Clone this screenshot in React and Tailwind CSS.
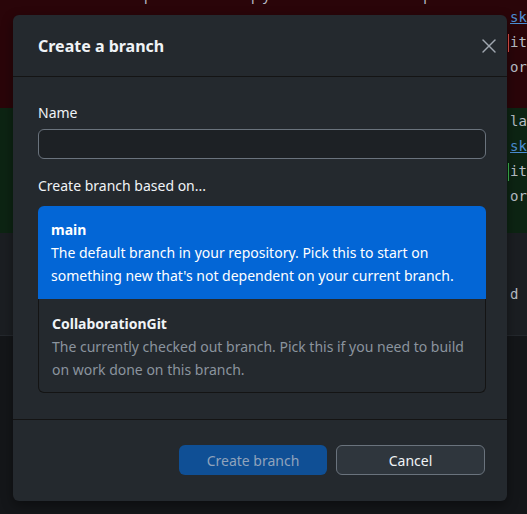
import { X } from "lucide-react";

const FONT = { fontFamily: '"Noto Sans", "Segoe UI", sans-serif' };
const MONO = { fontFamily: '"DejaVu Sans Mono", monospace' };

// fragments of the diff view that peek out on the right of the dialog
const RED_LINES = [
  { text: "sk", link: true },
  { text: "it", mark: true },
  { text: "or" },
];
const GREEN_LINES = [
  { text: "la" },
  { text: "sk", link: true },
  { text: "it", mark: true },
  { text: "or" },
];

function DiffLine({ line, markColor }) {
  return (
    <div className="flex h-[25px] items-center">
      <span className={`h-[18px] w-px ${line.mark ? markColor : "bg-transparent"}`} />
      <span
        className={`pl-[1px] text-[14px] ${line.link ? "text-[#4c8fd6] underline" : "text-[#b8bec6]"}`}
        style={MONO}
      >
        {line.text}
      </span>
    </div>
  );
}

function Option({ title, desc, selected }) {
  return (
    <div
      className={
        selected
          ? "rounded-t-[6px] bg-[#0366d6] px-[13px] py-[12px] text-white"
          : "rounded-b-[6px] border border-t-0 border-[#141414] px-[13px] pt-[13px] pb-[11px] text-[#8b949e]"
      }
    >
      <div className={`text-[14px] font-bold leading-[23px] ${selected ? "text-white" : "text-[#f0f3f6]"}`}>
        {title}
      </div>
      <div className="text-[14px] leading-[23px]">{desc}</div>
    </div>
  );
}

export default function App() {
  return (
    <div className="relative h-[514px] w-[527px] overflow-hidden bg-[#141619]" style={FONT}>
      {/* diff view behind the dialog */}
      <div className="flex h-[108px] flex-col bg-[#2a0509]">
        <div className="-mt-[15px] h-[20px] overflow-hidden whitespace-nowrap pl-[144px] text-[14px] leading-[20px] text-[#b8bec6]">
          p&nbsp;&nbsp;&nbsp;&nbsp;&nbsp;&nbsp;&nbsp;&nbsp;&nbsp;&nbsp;&nbsp;&nbsp;&nbsp;&nbsp;&nbsp;&nbsp;&nbsp;&nbsp;&nbsp;&nbsp;&nbsp;&nbsp;&nbsp;&nbsp;&nbsp;&nbsp;&nbsp;ply&nbsp;&nbsp;&nbsp;&nbsp;&nbsp;&nbsp;&nbsp;&nbsp;&nbsp;&nbsp;&nbsp;&nbsp;&nbsp;&nbsp;&nbsp;&nbsp;&nbsp;&nbsp;&nbsp;&nbsp;&nbsp;&nbsp;&nbsp;&nbsp;&nbsp;&nbsp;&nbsp;&nbsp;&nbsp;&nbsp;&nbsp;&nbsp;&nbsp;&nbsp;&nbsp;&nbsp;&nbsp;&nbsp;&nbsp;&nbsp;&nbsp;&nbsp;p&nbsp;&nbsp;&nbsp;&nbsp;&nbsp;&nbsp;&nbsp;&nbsp;&nbsp;&nbsp;&nbsp;&nbsp;&nbsp;&nbsp;&nbsp;&nbsp;&nbsp;&nbsp;&nbsp;&nbsp;&nbsp;&nbsp;&nbsp;&nbsp;&nbsp;&nbsp;&nbsp;&nbsp;&nbsp;&nbsp;&nbsp;&nbsp;&nbsp;&nbsp;&nbsp;&nbsp;&nbsp;&nbsp;&nbsp;&nbsp;&nbsp;&nbsp;&nbsp;&nbsp;&nbsp;&nbsp;&nbsp;&nbsp;&nbsp;&nbsp;&nbsp;&nbsp;&nbsp;&nbsp;&nbsp;&nbsp;&nbsp;&nbsp;y
        </div>
        <div className="flex flex-1">
          <div className="flex-1" />
          <div className="w-[19px]">
            {RED_LINES.map((l, i) => (
              <DiffLine key={i} line={l} markColor="bg-[#e5534b]" />
            ))}
          </div>
        </div>
      </div>
      <div className="flex h-[125px] bg-[#0d2413]">
        <div className="flex-1" />
        <div className="w-[19px] pt-[1px]">
          {GREEN_LINES.map((l, i) => (
            <DiffLine key={i} line={l} markColor="bg-[#3fb950]" />
          ))}
        </div>
      </div>
      <div className="flex h-[103px] border-b border-[#24282d] bg-[#1b1e22]">
        <div className="flex-1" />
        <div className="w-[19px] pt-[49px]">
          <DiffLine line={{ text: "d" }} />
        </div>
      </div>

      {/* dialog */}
      <div className="absolute left-[13px] top-[15px] flex h-[486px] w-[494px] flex-col rounded-[6px] bg-[#24292e] shadow-[0_4px_12px_rgba(0,0,0,0.4)]">
        <div className="flex h-[62px] items-center justify-between border-b border-[#141414] pl-[25px] pr-[6px]">
          <h1 className="text-[16px] font-bold text-[#f0f3f6]">Create a branch</h1>
          <button className="flex h-[24px] w-[24px] items-center justify-center text-[#a0a7b0]">
            <X size={24} strokeWidth={1.4} />
          </button>
        </div>

        <div className="flex flex-col border-b border-[#141414] pl-[25px] pr-[21px] pt-[26px] pb-[26px]">
          <label className="text-[14px] leading-[20px] text-[#f0f3f6]">Name</label>
          <input
            type="text"
            className="mt-[6px] h-[30px] w-full rounded-[6px] border border-[#6a737d] bg-[#1d2125] px-[8px] text-[14px] text-white outline-none"
          />
          <div className="mt-[17px] text-[14px] leading-[20px] text-[#f0f3f6]">Create branch based on...</div>
          <div className="mt-[10px] flex flex-col">
            <Option
              selected
              title="main"
              desc="The default branch in your repository. Pick this to start on something new that's not dependent on your current branch."
            />
            <Option
              title="CollaborationGit"
              desc="The currently checked out branch. Pick this if you need to build on work done on this branch."
            />
          </div>
        </div>

        <div className="flex flex-1 items-start justify-end gap-[9px] pt-[25px] pr-[22px]">
          <button className="h-[30px] w-[148px] rounded-[6px] bg-[#0f4f95] text-[14px] text-[#8fa3bc]">
            Create branch
          </button>
          <button className="h-[30px] w-[149px] rounded-[6px] border border-[#6a737d] bg-[#2f363d] text-[14px] text-[#f0f3f6]">
            Cancel
          </button>
        </div>
      </div>
    </div>
  );
}
